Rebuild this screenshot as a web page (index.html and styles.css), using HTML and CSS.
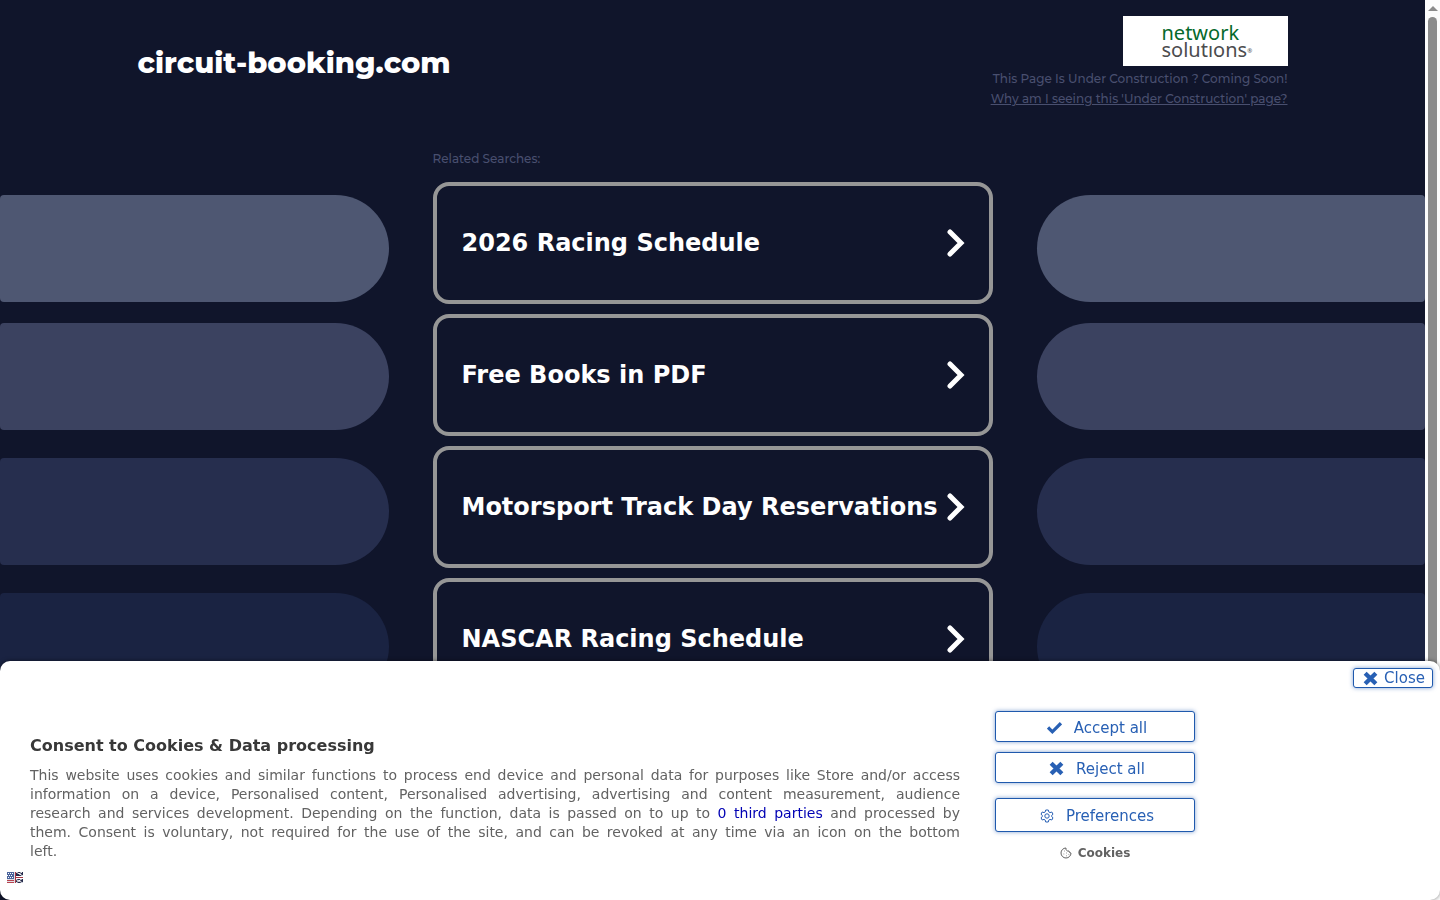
FILE: index.html
```html
<!DOCTYPE html>
<html lang="en">

<head>
    <meta charset="utf-8">
    <meta name="viewport" content="width=device-width, initial-scale=1.0">
    <title>circuit-booking.com</title>
    <link rel="stylesheet" href="styles.css">
</head>

<body>
    <div class="window">
        <div class="page">
            <header class="header">
                <h1 class="domain">circuit-booking.com</h1>
                <div class="sponsor">
                    <div class="logo">
                        <span class="logo-top">network</span>
                        <span class="logo-bottom">solutıons<sup>®</sup></span>
                    </div>
                    <p>This Page Is Under Construction ? Coming Soon!</p>
                    <a href="#">Why am I seeing this 'Under Construction' page?</a>
                </div>
            </header>

            <main class="content">
                <div class="pills pills-left">
                    <span></span><span></span><span></span><span></span>
                </div>

                <section class="searches">
                    <h2 class="searches-title">Related Searches:</h2>
                    <a class="search" href="#">
                        2026 Racing Schedule
                        <svg class="chevron" viewBox="0 0 18 28"><path d="M3 3 L14 14 L3 25" /></svg>
                    </a>
                    <a class="search" href="#">
                        Free Books in PDF
                        <svg class="chevron" viewBox="0 0 18 28"><path d="M3 3 L14 14 L3 25" /></svg>
                    </a>
                    <a class="search" href="#">
                        Motorsport Track Day Reservations
                        <svg class="chevron" viewBox="0 0 18 28"><path d="M3 3 L14 14 L3 25" /></svg>
                    </a>
                    <a class="search" href="#">
                        NASCAR Racing Schedule
                        <svg class="chevron" viewBox="0 0 18 28"><path d="M3 3 L14 14 L3 25" /></svg>
                    </a>
                </section>

                <div class="pills pills-right">
                    <span></span><span></span><span></span><span></span>
                </div>
            </main>
        </div>

        <div class="scrollbar">
            <span class="scrollbar-arrow"></span>
            <span class="scrollbar-thumb"></span>
        </div>
    </div>

    <div class="consent" role="dialog" aria-labelledby="consentTitle">
        <button class="btn btn-close" type="button">
            <svg class="icon-cross" viewBox="0 0 14 14"><path d="M2 2 L12 12 M12 2 L2 12" /></svg>
            Close
        </button>

        <div class="consent-body">
            <div class="consent-text">
                <h2 id="consentTitle">Consent to Cookies &amp; Data processing</h2>
                <p>
                    This website uses cookies and similar functions to process end device and personal data for purposes like Store and/or access<br>
                    information on a device, Personalised content, Personalised advertising, advertising and content measurement, audience<br>
                    research and services development. Depending on the function, data is passed on to up to <a href="#">0 third parties</a> and processed by<br>
                    them. Consent is voluntary, not required for the use of the site, and can be revoked at any time via an icon on the bottom<br>
                    left.
                </p>
            </div>

            <div class="consent-actions">
                <button class="btn" type="button">
                    <svg class="icon-check" viewBox="0 0 14 14"><path d="M1 7 L5 11 L13 3" /></svg>
                    Accept all
                </button>
                <button class="btn" type="button">
                    <svg class="icon-cross" viewBox="0 0 14 14"><path d="M2 2 L12 12 M12 2 L2 12" /></svg>
                    Reject all
                </button>
                <button class="btn btn-preferences" type="button">
                    <svg class="icon-line" viewBox="0 0 14 14">
                        <path d="M5.7 1 H8.3 L8.7 2.8 L10 3.6 L11.8 3 L13 5.2 L11.7 6.4 V7.6 L13 8.8 L11.8 11 L10 10.4 L8.7 11.2 L8.3 13 H5.7 L5.3 11.2 L4 10.4 L2.2 11 L1 8.8 L2.3 7.6 V6.4 L1 5.2 L2.2 3 L4 3.6 L5.3 2.8 Z" />
                        <circle cx="7" cy="7" r="2.2" />
                    </svg>
                    Preferences
                </button>
                <a class="cookies-link" href="#">
                    <svg class="icon-cookie" viewBox="0 0 12 12">
                        <path d="M6 1 A5 5 0 1 0 11 6 A2 2 0 0 1 9 4 A2.4 2.4 0 0 1 6 1 Z" />
                        <path d="M4 4 h.6 M3.6 7 h.6 M6.4 6 h.6 M6.4 8.8 h.6 M8.6 7.4 h.6" />
                    </svg>
                    Cookies
                </a>
            </div>
        </div>

        <button class="language" type="button" aria-label="Language: English">
            <svg viewBox="0 0 16 11">
                <path fill="#dfdfe6" d="M0 0h16v11H0z" />
                <path fill="#4a649c" d="M0 0h7v7H0z" />
                <path stroke="#fff" stroke-dasharray="1 1" d="M1 1.5h6M0 3.5h6M1 5.5h6" />
                <path stroke="#b8434f" d="M0 8.5h7M0 10.5h7" />
                <path fill="#252b4b" d="M8 0h8v11H8z" />
                <path stroke="#fff" d="M9 0l7 4M9 11l7-5M8 7l8 4M15 0l-3 2" />
                <path stroke="#fff" stroke-width="3" d="M8 5.5h8" />
                <path stroke="#a53545" d="M8 5.5h8M8.500 0v11" />
            </svg>
        </button>
    </div>
</body>

</html>
```
FILE: styles.css
```css
* {
    box-sizing: border-box;
}

body {
    margin: 0;
    height: 100vh;
    overflow: hidden;
    background-color: #10152b;
    font-family: "DejaVu Sans", sans-serif;
}

h1,
h2,
p {
    margin: 0;
}

.window {
    display: flex;
    height: 100vh;
    overflow: hidden;
}

.page {
    flex: 1;
    font-family: Montserrat, Inter, sans-serif;
}

.header {
    display: flex;
    justify-content: space-between;
    align-items: flex-start;
    max-width: 1150px;
    margin: 0 auto;
    padding-top: 16px;
}

.domain {
    padding-top: 29px;
    color: #fff;
    font-size: 29px;
    font-weight: 800;
    line-height: 36px;
}

.sponsor {
    display: flex;
    flex-direction: column;
    align-items: flex-end;
    color: #494f6f;
    font-size: 12px;
    font-weight: 500;
    line-height: 20px;
}

.sponsor a {
    color: inherit;
}

.logo {
    width: 165px;
    height: 50px;
    padding: 8px 0 0 39px;
    margin-bottom: 3px;
    background-color: #fff;
    font-family: "Noto Sans", sans-serif;
    font-size: 20px;
    font-weight: 400;
    line-height: 17px;
}

.logo span {
    display: block;
}

.logo-top {
    color: #05692b;
}

.logo-bottom {
    color: #4c4c4e;
}

.logo sup {
    font-size: 6px;
    line-height: 0;
    vertical-align: 4px;
}

.content {
    display: grid;
    grid-template-columns: 1fr 560px 1fr;
    column-gap: 44px;
    margin-top: 40px;
}

.searches-title {
    margin-bottom: 13px;
    color: #494f6f;
    font-size: 12px;
    font-weight: 500;
    line-height: 20px;
}

.search {
    display: flex;
    justify-content: space-between;
    align-items: center;
    height: 122px;
    margin-bottom: 10px;
    padding: 0 24px 0 25px;
    border: 4px solid #969696;
    border-radius: 16px;
    color: #fff;
    font: 700 24px "DejaVu Sans", sans-serif;
    text-decoration: none;
    white-space: nowrap;
}

.chevron {
    flex: none;
    width: 18px;
    height: 28px;
    fill: none;
    stroke: #fff;
    stroke-width: 5;
    stroke-linecap: round;
}

.pills {
    display: flex;
    flex-direction: column;
    gap: 28px;
    padding-top: 46px;
}

.pills span {
    height: 107px;
    background-color: #4e5772;
}

.pills-left span {
    border-radius: 4px 54px 54px 4px;
}

.pills-right span {
    border-radius: 54px 4px 4px 54px;
}

.pills span:nth-child(2) {
    margin-top: -7px;
    background-color: #3b4260;
}

.pills span:nth-child(3) {
    background-color: #262e4e;
}

.pills span:nth-child(4) {
    background-color: #1a2342;
}

.scrollbar {
    display: flex;
    flex-direction: column;
    align-items: center;
    width: 15px;
    background-color: #fcfcfc;
}

.scrollbar-arrow {
    margin: 6px 0;
    border: 5px solid transparent;
    border-top: 0;
    border-bottom: 5px solid #8b8b8b;
}

.scrollbar-thumb {
    width: 9px;
    height: 760px;
    border-radius: 5px;
    background-color: #8b8b8b;
}

.consent {
    position: fixed;
    right: 0;
    bottom: 0;
    left: 0;
    display: flex;
    flex-direction: column;
    padding: 7px;
    border-radius: 10px;
    background-color: #fff;
    box-shadow: 0 0 4px #00000080;
    color: #626262;
}

.btn {
    display: flex;
    justify-content: center;
    align-items: center;
    gap: 12px;
    width: 200px;
    height: 31px;
    padding: 2px 0 0 4px;
    border: 1px solid #1f59ad;
    border-radius: 3px;
    background-color: #fff;
    box-shadow: 0 0 4px #1f59ad90;
    color: #2860b4;
    font: 15px "DejaVu Sans", sans-serif;
    cursor: pointer;
}

.btn-close {
    align-self: flex-end;
    gap: 6px;
    width: 80px;
    height: 20px;
    padding: 0 0 0 2px;
}

.btn-preferences {
    height: 34px;
    margin-top: 5px;
}

.consent-body {
    display: grid;
    grid-template-columns: 930px 200px;
    column-gap: 35px;
    padding: 23px 23px 0;
}

.consent-text {
    padding-top: 24px;
}

.consent-text h2 {
    margin-bottom: 9px;
    color: #383838;
    font-size: 16px;
    line-height: 22px;
}

.consent-text p {
    font-size: 14px;
    line-height: 19px;
    text-align: justify;
    text-align-last: justify;
}

.consent-text a {
    color: #0000b4;
    text-decoration: none;
}

.consent-actions {
    display: flex;
    flex-direction: column;
    align-items: center;
    gap: 10px;
}

.cookies-link {
    display: flex;
    align-items: center;
    gap: 6px;
    margin-top: 4px;
    color: #626262;
    font-size: 12px;
    font-weight: 700;
    text-decoration: none;
}

.icon-cross,
.icon-check,
.icon-line {
    width: 15px;
    height: 15px;
    fill: none;
    stroke: currentColor;
    stroke-width: 4;
}

.icon-check {
    stroke-width: 3;
}

.icon-line {
    width: 14px;
    height: 14px;
    stroke-width: 1;
}

.icon-cookie {
    width: 12px;
    height: 12px;
    fill: none;
    stroke: currentColor;
}

.language {
    width: 16px;
    height: 11px;
    margin: 11px 0 10px;
    padding: 0;
    border: 0;
    background: none;
}

.language svg {
    display: block;
}
```
